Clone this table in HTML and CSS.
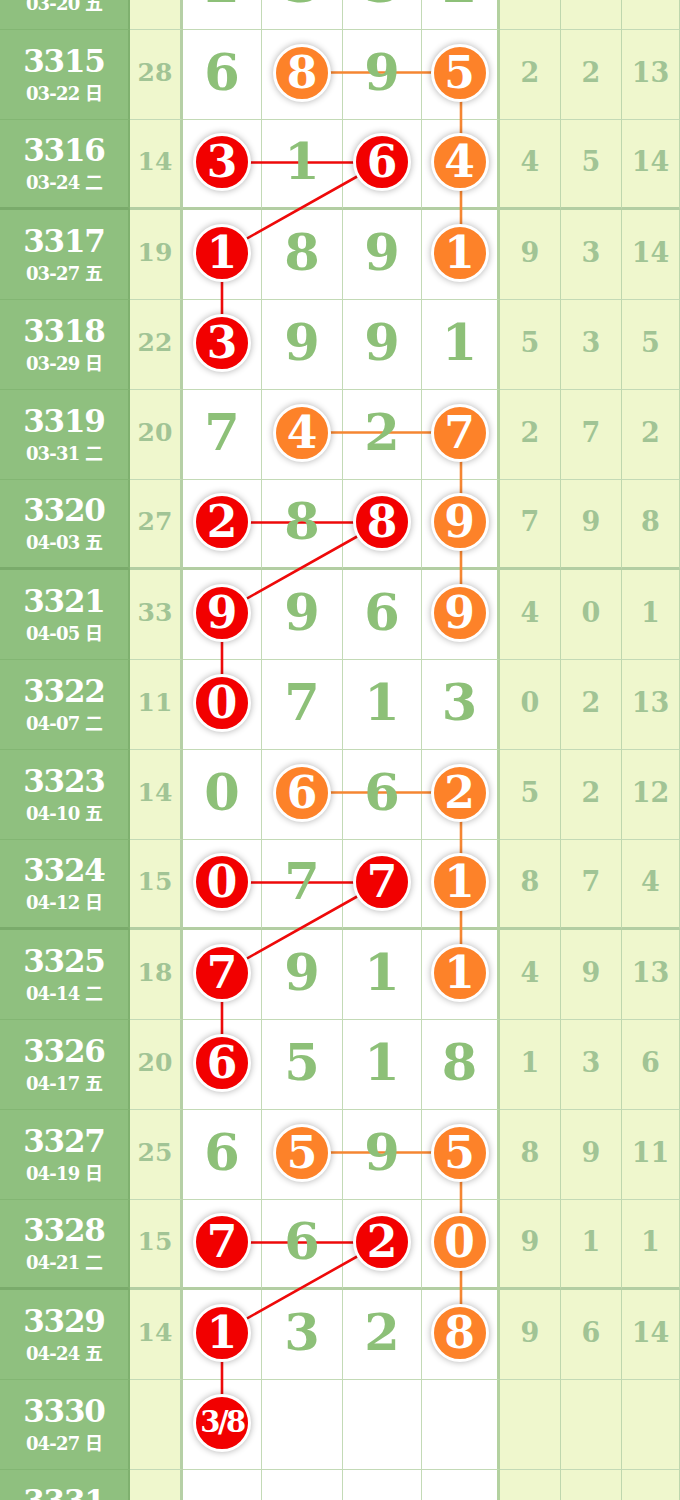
FILE: index.html
```
<!DOCTYPE html>
<html lang="zh">
<head>
<meta charset="utf-8">
<title>走势图</title>
<link rel="stylesheet" href="styles.css">
</head>
<body>
<div class="chart">
  <svg class="links" width="680" height="1620" viewBox="0 0 680 1620">
    <g class="orange">
      <line x1="302" y1="132.5" x2="461" y2="132.5"/>
      <polyline points="461,132.5 461,222.5 461,312.5"/>
      <line x1="302" y1="492.5" x2="461" y2="492.5"/>
      <polyline points="461,492.5 461,582.5 461,672.5"/>
      <line x1="302" y1="852.5" x2="461" y2="852.5"/>
      <polyline points="461,852.5 461,942.5 461,1032.5"/>
      <line x1="302" y1="1212.5" x2="461" y2="1212.5"/>
      <polyline points="461,1212.5 461,1302.5 461,1392.5"/>
    </g>
    <g class="red">
      <line x1="222" y1="222.5" x2="382" y2="222.5"/>
      <polyline points="382,222.5 222,312.5 222,402.5"/>
      <line x1="222" y1="582.5" x2="382" y2="582.5"/>
      <polyline points="382,582.5 222,672.5 222,762.5"/>
      <line x1="222" y1="942.5" x2="382" y2="942.5"/>
      <polyline points="382,942.5 222,1032.5 222,1122.5"/>
      <line x1="222" y1="1302.5" x2="382" y2="1302.5"/>
      <polyline points="382,1302.5 222,1392.5 222,1482.5"/>
    </g>
  </svg>

  <div class="row top">
    <div class="c period"><b>3314</b><i>03-20 五</i></div>
    <div class="c sum">19</div>
    <div class="c d"><span class="num">2</span></div>
    <div class="c d"><span class="num">3</span></div>
    <div class="c d"><span class="num">3</span></div>
    <div class="c d last"><span class="num">2</span></div>
    <div class="c r">3</div><div class="c r">1</div><div class="c r">11</div>
  </div>

  <div class="row">
    <div class="c period"><b>3315</b><i>03-22 日</i></div>
    <div class="c sum">28</div>
    <div class="c d"><span class="num">6</span></div>
    <div class="c d"><span class="ball orange">8</span></div>
    <div class="c d"><span class="num">9</span></div>
    <div class="c d last"><span class="ball orange">5</span></div>
    <div class="c r">2</div><div class="c r">2</div><div class="c r">13</div>
  </div>

  <div class="row end">
    <div class="c period"><b>3316</b><i>03-24 二</i></div>
    <div class="c sum">14</div>
    <div class="c d"><span class="ball red">3</span></div>
    <div class="c d"><span class="num">1</span></div>
    <div class="c d"><span class="ball red">6</span></div>
    <div class="c d last"><span class="ball orange">4</span></div>
    <div class="c r">4</div><div class="c r">5</div><div class="c r">14</div>
  </div>

  <div class="row">
    <div class="c period"><b>3317</b><i>03-27 五</i></div>
    <div class="c sum">19</div>
    <div class="c d"><span class="ball red">1</span></div>
    <div class="c d"><span class="num">8</span></div>
    <div class="c d"><span class="num">9</span></div>
    <div class="c d last"><span class="ball orange">1</span></div>
    <div class="c r">9</div><div class="c r">3</div><div class="c r">14</div>
  </div>

  <div class="row">
    <div class="c period"><b>3318</b><i>03-29 日</i></div>
    <div class="c sum">22</div>
    <div class="c d"><span class="ball red">3</span></div>
    <div class="c d"><span class="num">9</span></div>
    <div class="c d"><span class="num">9</span></div>
    <div class="c d last"><span class="num">1</span></div>
    <div class="c r">5</div><div class="c r">3</div><div class="c r">5</div>
  </div>

  <div class="row">
    <div class="c period"><b>3319</b><i>03-31 二</i></div>
    <div class="c sum">20</div>
    <div class="c d"><span class="num">7</span></div>
    <div class="c d"><span class="ball orange">4</span></div>
    <div class="c d"><span class="num">2</span></div>
    <div class="c d last"><span class="ball orange">7</span></div>
    <div class="c r">2</div><div class="c r">7</div><div class="c r">2</div>
  </div>

  <div class="row end">
    <div class="c period"><b>3320</b><i>04-03 五</i></div>
    <div class="c sum">27</div>
    <div class="c d"><span class="ball red">2</span></div>
    <div class="c d"><span class="num">8</span></div>
    <div class="c d"><span class="ball red">8</span></div>
    <div class="c d last"><span class="ball orange">9</span></div>
    <div class="c r">7</div><div class="c r">9</div><div class="c r">8</div>
  </div>

  <div class="row">
    <div class="c period"><b>3321</b><i>04-05 日</i></div>
    <div class="c sum">33</div>
    <div class="c d"><span class="ball red">9</span></div>
    <div class="c d"><span class="num">9</span></div>
    <div class="c d"><span class="num">6</span></div>
    <div class="c d last"><span class="ball orange">9</span></div>
    <div class="c r">4</div><div class="c r">0</div><div class="c r">1</div>
  </div>

  <div class="row">
    <div class="c period"><b>3322</b><i>04-07 二</i></div>
    <div class="c sum">11</div>
    <div class="c d"><span class="ball red">0</span></div>
    <div class="c d"><span class="num">7</span></div>
    <div class="c d"><span class="num">1</span></div>
    <div class="c d last"><span class="num">3</span></div>
    <div class="c r">0</div><div class="c r">2</div><div class="c r">13</div>
  </div>

  <div class="row">
    <div class="c period"><b>3323</b><i>04-10 五</i></div>
    <div class="c sum">14</div>
    <div class="c d"><span class="num">0</span></div>
    <div class="c d"><span class="ball orange">6</span></div>
    <div class="c d"><span class="num">6</span></div>
    <div class="c d last"><span class="ball orange">2</span></div>
    <div class="c r">5</div><div class="c r">2</div><div class="c r">12</div>
  </div>

  <div class="row end">
    <div class="c period"><b>3324</b><i>04-12 日</i></div>
    <div class="c sum">15</div>
    <div class="c d"><span class="ball red">0</span></div>
    <div class="c d"><span class="num">7</span></div>
    <div class="c d"><span class="ball red">7</span></div>
    <div class="c d last"><span class="ball orange">1</span></div>
    <div class="c r">8</div><div class="c r">7</div><div class="c r">4</div>
  </div>

  <div class="row">
    <div class="c period"><b>3325</b><i>04-14 二</i></div>
    <div class="c sum">18</div>
    <div class="c d"><span class="ball red">7</span></div>
    <div class="c d"><span class="num">9</span></div>
    <div class="c d"><span class="num">1</span></div>
    <div class="c d last"><span class="ball orange">1</span></div>
    <div class="c r">4</div><div class="c r">9</div><div class="c r">13</div>
  </div>

  <div class="row">
    <div class="c period"><b>3326</b><i>04-17 五</i></div>
    <div class="c sum">20</div>
    <div class="c d"><span class="ball red">6</span></div>
    <div class="c d"><span class="num">5</span></div>
    <div class="c d"><span class="num">1</span></div>
    <div class="c d last"><span class="num">8</span></div>
    <div class="c r">1</div><div class="c r">3</div><div class="c r">6</div>
  </div>

  <div class="row">
    <div class="c period"><b>3327</b><i>04-19 日</i></div>
    <div class="c sum">25</div>
    <div class="c d"><span class="num">6</span></div>
    <div class="c d"><span class="ball orange">5</span></div>
    <div class="c d"><span class="num">9</span></div>
    <div class="c d last"><span class="ball orange">5</span></div>
    <div class="c r">8</div><div class="c r">9</div><div class="c r">11</div>
  </div>

  <div class="row end">
    <div class="c period"><b>3328</b><i>04-21 二</i></div>
    <div class="c sum">15</div>
    <div class="c d"><span class="ball red">7</span></div>
    <div class="c d"><span class="num">6</span></div>
    <div class="c d"><span class="ball red">2</span></div>
    <div class="c d last"><span class="ball orange">0</span></div>
    <div class="c r">9</div><div class="c r">1</div><div class="c r">1</div>
  </div>

  <div class="row">
    <div class="c period"><b>3329</b><i>04-24 五</i></div>
    <div class="c sum">14</div>
    <div class="c d"><span class="ball red">1</span></div>
    <div class="c d"><span class="num">3</span></div>
    <div class="c d"><span class="num">2</span></div>
    <div class="c d last"><span class="ball orange">8</span></div>
    <div class="c r">9</div><div class="c r">6</div><div class="c r">14</div>
  </div>

  <div class="row">
    <div class="c period"><b>3330</b><i>04-27 日</i></div>
    <div class="c sum"></div>
    <div class="c d"><span class="ball red small">3/8</span></div>
    <div class="c d"></div>
    <div class="c d"></div>
    <div class="c d last"></div>
    <div class="c r"></div><div class="c r"></div><div class="c r"></div>
  </div>

  <div class="row">
    <div class="c period"><b>3331</b><i>04-29 二</i></div>
    <div class="c sum"></div>
    <div class="c d"></div>
    <div class="c d"></div>
    <div class="c d"></div>
    <div class="c d last"></div>
    <div class="c r"></div><div class="c r"></div><div class="c r"></div>
  </div>
</div>
</body>
</html>
```

FILE: styles.css
```
html, body {
  margin: 0;
  padding: 0;
  background: #ffffff;
  overflow: hidden;
}

.chart {
  position: relative;
  width: 680px;
  margin-top: -60px;
  font-family: "DejaVu Serif", "Noto Sans CJK SC", serif;
}

.links {
  position: absolute;
  top: 0;
  left: 0;
  z-index: 1;
  pointer-events: none;
}

.links line,
.links polyline {
  fill: none;
  stroke-width: 2.6;
}

.links .red line,
.links .red polyline {
  stroke: #ee0a0a;
}

.links .orange line,
.links .orange polyline {
  stroke: #f58632;
}

.row {
  display: grid;
  grid-template-columns: 130px 53px 79px 81px 79px 78px 61px 61px 58px;
  height: 90px;
}

.c {
  box-sizing: border-box;
  display: flex;
  align-items: center;
  justify-content: center;
  padding-bottom: 4px;
  border-bottom: 1px solid #c3dab6;
  border-right: 1px solid #c3dab6;
}

.row.top .d {
  padding-bottom: 0;
  padding-top: 0;
}

.row.end .c {
  border-bottom: 3px solid #b3cea3;
}

.period {
  flex-direction: column;
  background: #8fc07f;
  color: #ffffff;
  border-right: 2px solid #7fb16f;
  border-bottom-color: #83b673;
  padding-bottom: 0;
  padding-top: 0;
}

.row.end .period {
  border-bottom-color: #7aab6b;
}

.period b {
  font-weight: 700;
  font-size: 31px;
  line-height: 34px;
  letter-spacing: -1.2px;
}

.period i {
  font-style: normal;
  font-weight: 700;
  font-size: 18px;
  line-height: 24px;
  margin-top: 4px;
  letter-spacing: -0.8px;
}

.sum {
  background: #eff7cd;
  border-right: 3px solid #b6d0a6;
  color: #a1c495;
  font-weight: 700;
  font-size: 25px;
}

.d {
  background: #ffffff;
  position: relative;
}

.d.last {
  border-right: 3px solid #b3d19f;
}

.r {
  background: #eff7cd;
  color: #a1c495;
  font-weight: 700;
  font-size: 27px;
  border-right-color: #bed7ae;
}

.num {
  position: relative;
  z-index: 2;
  color: #8dc078;
  font-weight: 700;
  font-size: 51px;
  line-height: 1;
}

.ball {
  position: relative;
  z-index: 2;
  box-sizing: border-box;
  width: 58px;
  height: 58px;
  border-radius: 50%;
  border: 3px solid #ffffff;
  box-shadow: 0 0 7px rgba(0, 0, 0, 0.32);
  display: flex;
  align-items: center;
  justify-content: center;
  color: #ffffff;
  font-weight: 700;
  font-size: 44px;
  line-height: 1;
}

.ball.red {
  background: #f20000;
}

.ball.orange {
  background: #fd8229;
}

.ball.small {
  font-size: 29px;
  letter-spacing: -2.5px;
}
```
